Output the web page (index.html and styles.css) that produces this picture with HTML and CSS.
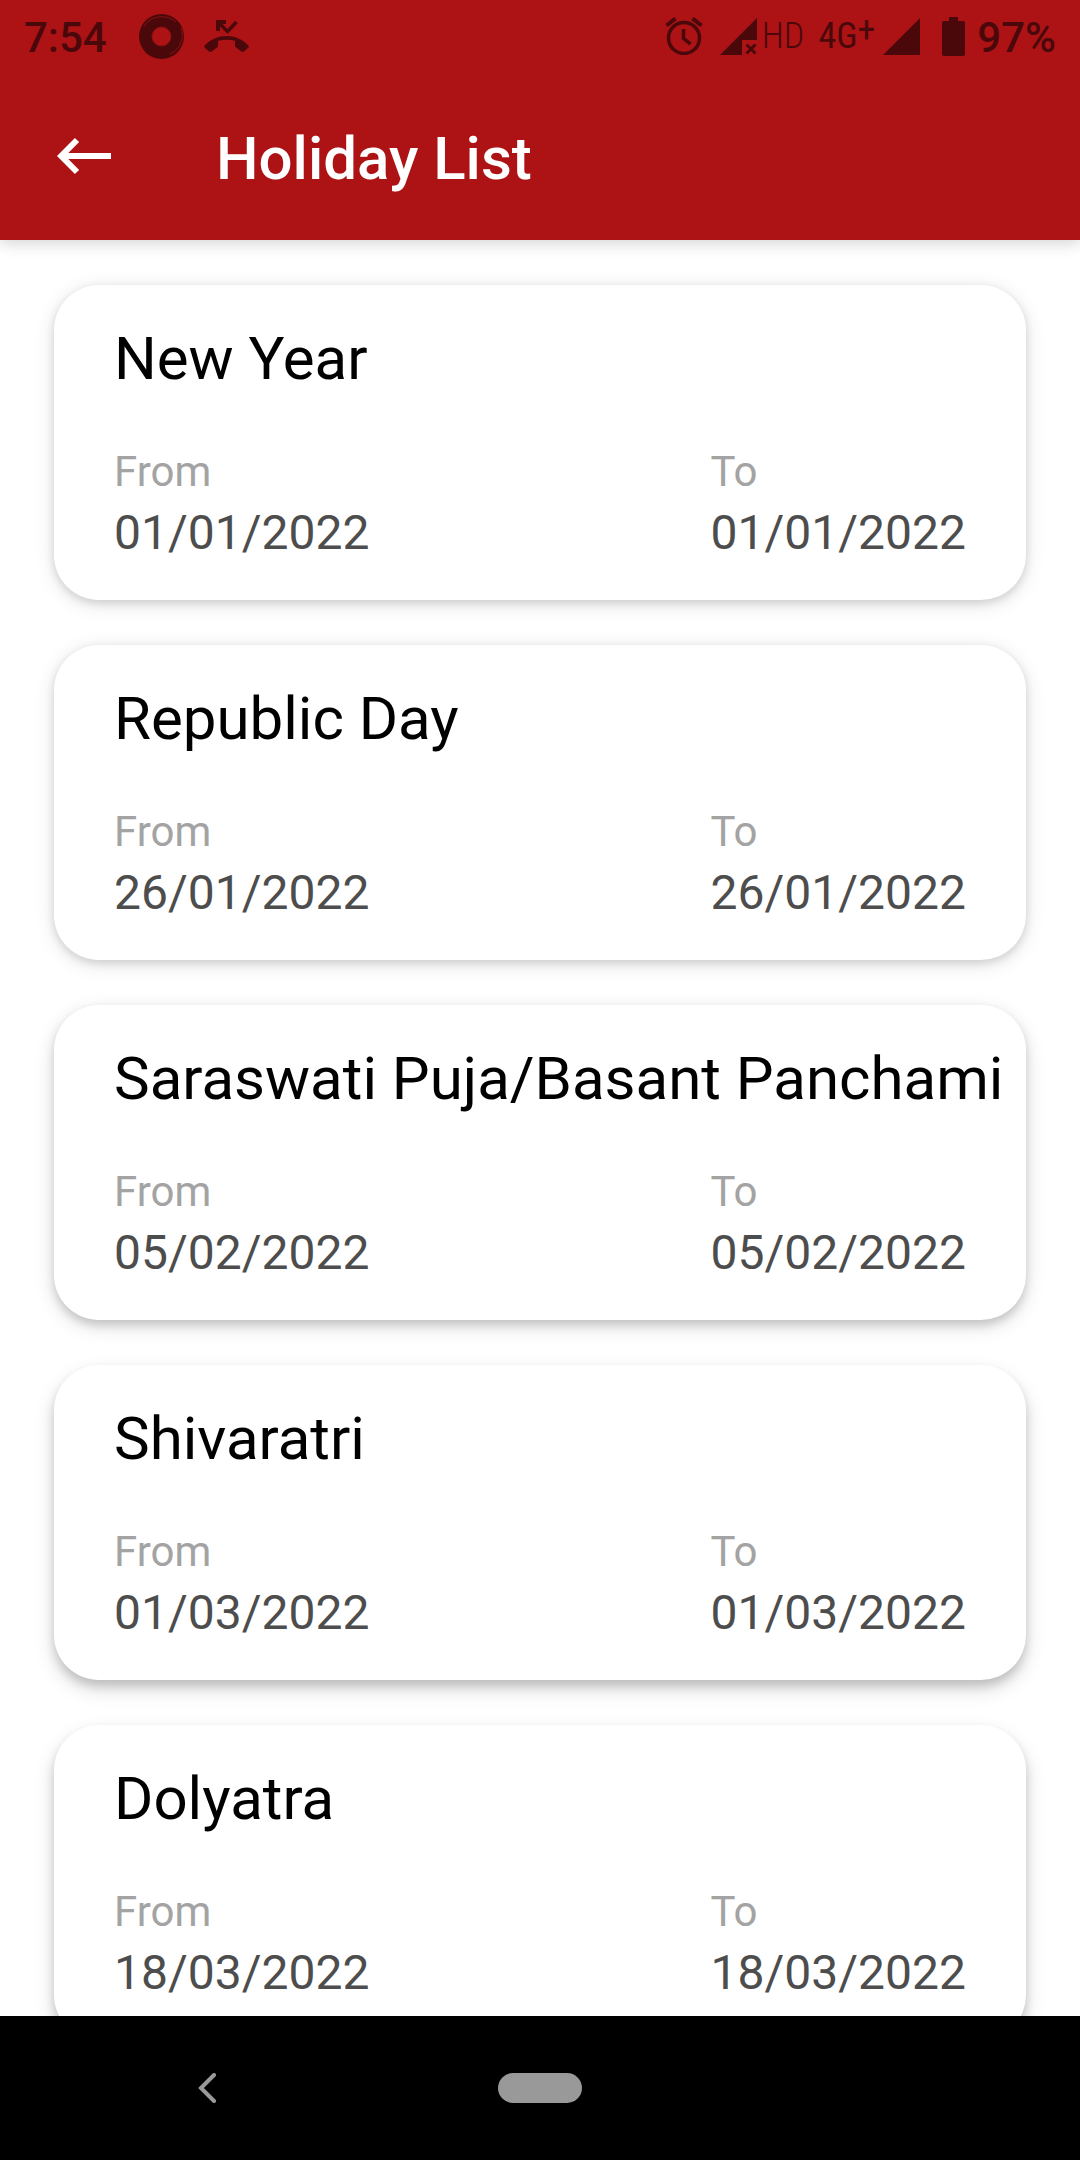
FILE: index.html
```html
<!DOCTYPE html>
<html lang="en">
<head>
<meta charset="utf-8">
<meta name="viewport" content="width=device-width, initial-scale=1">
<title>Holiday List</title>
<link rel="stylesheet" href="styles.css">
</head>
<body>
<header class="top">
  <div class="status">
    <div class="status-left">
      <span class="status-text">7:54</span>
      <svg class="icon-disc" viewBox="0 0 45 45" aria-hidden="true">
        <circle cx="22.5" cy="22.5" r="22.5" fill="#4a080a"/>
        <circle cx="22.5" cy="22.5" r="9.5" fill="#ad1315" stroke="#8a1012" stroke-width="1"/>
        <path d="M5 12A21 20 0 0 1 37 8M42 14A20.500 20.500 0 0 1 31 40" fill="none" stroke="#8a1012" stroke-width="1"/>
      </svg>
      <svg class="icon-missed" viewBox="0 0 45 32" aria-hidden="true">
        <path d="M14 2L23.500 11.500L32.500 2" fill="none" stroke="#4a080a" stroke-width="3.500"/>
        <path d="M12 0H22V4H16V11H12Z" fill="#4a080a"/>
        <path d="M1 25C13 13 32 13 44 25Q45.500 26.500 44 28L40 31.500Q38.500 32.500 37 31.200L32 27.500Q31 26.500 31 25.500V20.800Q22.500 18.500 14 20.800V25.500Q14 26.500 13 27.500L8 31.200Q6.500 32.500 5 31.500L1 28Q-.5 26.500 1 25Z" fill="#4a080a"/>
      </svg>
    </div>
    <div class="status-right">
      <svg class="icon-alarm" viewBox="0 0 38 38" fill="none" stroke="#4a080a" aria-hidden="true">
        <circle cx="19" cy="21" r="15.500" stroke-width="3.500"/>
        <path d="M18.500 12V21.500L25.500 27" stroke-width="3.500"/>
        <path d="M1.500 8.500L10.500 1.500M27.500 1.500L36.500 8.500" stroke-width="4"/>
      </svg>
      <svg class="icon-signal" viewBox="0 0 37 37" aria-hidden="true">
        <path d="M37 0V22H22V37H0Z" fill="#4a080a"/>
        <path d="M26.500 26.500L35.500 35.500M35.500 26.500L26.500 35.500" stroke="#4a080a" stroke-width="3"/>
      </svg>
      <span class="network">HD</span>
      <span class="network network-data">4G<span class="plus">+</span></span>
      <svg class="icon-signal" viewBox="0 0 37 37" aria-hidden="true">
        <path d="M37 0V37H0Z" fill="#4a080a"/>
      </svg>
      <svg class="icon-battery" viewBox="0 0 23 39" aria-hidden="true">
        <path d="M7 0H16V4H21Q23 4 23 6V37Q23 39 21 39H2Q0 39 0 37V6Q0 4 2 4H7Z" fill="#4a080a"/>
      </svg>
      <span class="status-text">97%</span>
    </div>
  </div>
  <div class="app-bar">
    <button class="back" type="button" aria-label="Back">
      <svg viewBox="0 0 54 38" fill="none" stroke="#fff" aria-hidden="true">
        <path d="M54 19H5M20 3L4.200 19L20 35" stroke-width="6"/>
      </svg>
    </button>
    <h1 class="title">Holiday List</h1>
  </div>
</header>
<main class="list">
  <article class="card">
    <h2 class="name">New Year</h2>
    <dl class="dates">
      <div><dt>From</dt><dd>01/01/2022</dd></div>
      <div><dt>To</dt><dd>01/01/2022</dd></div>
    </dl>
  </article>
  <article class="card">
    <h2 class="name">Republic Day</h2>
    <dl class="dates">
      <div><dt>From</dt><dd>26/01/2022</dd></div>
      <div><dt>To</dt><dd>26/01/2022</dd></div>
    </dl>
  </article>
  <article class="card card-mid">
    <h2 class="name">Saraswati Puja/Basant Panchami</h2>
    <dl class="dates">
      <div><dt>From</dt><dd>05/02/2022</dd></div>
      <div><dt>To</dt><dd>05/02/2022</dd></div>
    </dl>
  </article>
  <article class="card card-low">
    <h2 class="name">Shivaratri</h2>
    <dl class="dates">
      <div><dt>From</dt><dd>01/03/2022</dd></div>
      <div><dt>To</dt><dd>01/03/2022</dd></div>
    </dl>
  </article>
  <article class="card card-low">
    <h2 class="name">Dolyatra</h2>
    <dl class="dates">
      <div><dt>From</dt><dd>18/03/2022</dd></div>
      <div><dt>To</dt><dd>18/03/2022</dd></div>
    </dl>
  </article>
</main>
<nav class="system-nav" aria-label="System">
  <button class="nav-back" type="button" aria-label="Back">
    <svg viewBox="0 0 18 30" fill="none" stroke="#999" aria-hidden="true">
      <path d="M16 2L3 15L16 28" stroke-width="4" stroke-linecap="round"/>
    </svg>
  </button>
  <button class="nav-home" type="button" aria-label="Home"></button>
</nav>
</body>
</html>
```

FILE: styles.css
```css
* {
  box-sizing: border-box;
}

body {
  margin: 0;
  height: 100vh;
  display: flex;
  flex-direction: column;
  background: #fff;
  font-family: Roboto, "Noto Sans", sans-serif;
}

h1, h2, dl, dd {
  margin: 0;
  font-weight: 400;
}

button {
  border: 0;
  padding: 0;
  background: none;
}

svg {
  display: block;
  flex: none;
}

.top {
  position: relative;
  z-index: 1;
  flex: none;
  background: #ad1315;
  box-shadow: 0 2px 16px rgba(0, 0, 0, 0.2);
}

.status {
  display: flex;
  justify-content: space-between;
  align-items: center;
  height: 72px;
  padding: 0 24px;
  color: #4a080a;
}

.status-left,
.status-right {
  display: flex;
  align-items: center;
}

.status-left {
  gap: 20px;
}

.status-text {
  padding-top: 3px;
  font-size: 42px;
  line-height: 50px;
  font-weight: 500;
}

.icon-disc {
  width: 45px;
  height: 45px;
  margin-left: 12px;
}

.icon-missed {
  width: 45px;
  height: 32px;
}

.icon-alarm {
  width: 38px;
  height: 38px;
  margin-right: 17px;
}

.icon-signal {
  width: 37px;
  height: 37px;
}

.icon-battery {
  width: 23px;
  height: 39px;
  margin: 0 12px 0 22px;
}

.network {
  display: flex;
  margin-left: 5px;
  font-family: "Roboto Condensed", "Liberation Sans Narrow", Roboto, sans-serif;
  font-size: 36px;
  line-height: 40px;
  font-weight: 300;
}

.network-data {
  margin: 0 8px 0 14px;
  font-weight: 400;
}

.plus {
  line-height: 28px;
}

.app-bar {
  display: flex;
  align-items: center;
  gap: 105px;
  height: 168px;
  padding: 0 57px;
}

.back svg {
  width: 54px;
  height: 38px;
}

.title {
  padding-top: 6px;
  color: #fff;
  font-size: 60px;
  line-height: 70px;
  font-weight: 500;
}

.list {
  flex: 1;
  min-height: 0;
  display: flex;
  flex-direction: column;
  gap: 45px;
  padding: 45px 54px;
  overflow-y: auto;
  scrollbar-width: none;
}

.card {
  flex: none;
  padding: 39px 60px;
  border-radius: 45px;
  background: #fff;
  box-shadow: 0 3px 8px rgba(0, 0, 0, 0.12), 0 4px 20px rgba(0, 0, 0, 0.12);
}

.card-mid {
  box-shadow: 0 5px 9px rgba(0, 0, 0, 0.14), 0 6px 20px rgba(0, 0, 0, 0.14);
}

.card-low {
  box-shadow: 0 6px 10px rgba(0, 0, 0, 0.15), 0 9px 20px rgba(0, 0, 0, 0.15);
}

.name {
  margin-bottom: 53px;
  color: #000;
  font-size: 60px;
  line-height: 70px;
  white-space: nowrap;
}

.dates {
  display: flex;
  justify-content: space-between;
}

dt {
  margin-bottom: 8px;
  color: #a3a3a3;
  font-size: 42px;
  line-height: 50px;
}

dd {
  color: #4d4d4d;
  font-size: 48px;
  line-height: 56px;
}

.system-nav {
  flex: none;
  display: grid;
  grid-template-columns: 1fr auto 1fr;
  align-items: center;
  height: 144px;
  background: #000;
}

.nav-back {
  justify-self: center;
  margin-right: 84px;
}

.nav-back svg {
  width: 18px;
  height: 30px;
}

.nav-home {
  width: 84px;
  height: 30px;
  border-radius: 15px;
  background: #999;
}
```
